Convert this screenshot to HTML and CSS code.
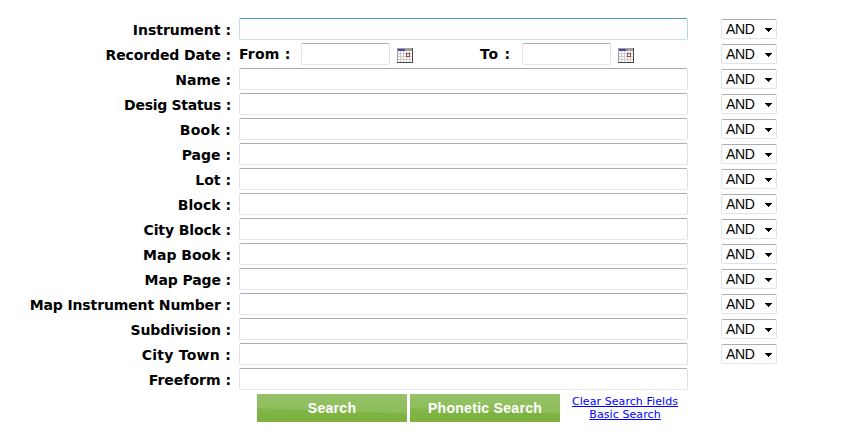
FILE: index.html
```
<!DOCTYPE html>
<html lang="en">
<head>
<meta charset="utf-8">
<title>Advanced Search</title>
<link rel="stylesheet" href="styles.css">
</head>
<body>
<svg width="0" height="0" class="defs" aria-hidden="true">
<symbol id="calendar" viewBox="0 0 16 15" shape-rendering="crispEdges">
<path fill="#fff" d="M0 0h16v15H0z"/>
<path fill="#ccc" d="M3 3h1v11H3zM6 3h1v11H6zM9 3h1v11H9zM12 3h1v11h-1zM1 5h14v1H1zM1 8h14v1H1zM1 11h14v1H1z"/>
<path fill="#a0a0a0" d="M0 0h16v3H0zM0 3h1v12H0z"/>
<path fill="#4848a8" d="M1 1h7v2H1z"/>
<path fill="#484848" d="M15 0h1v15h-1zM0 14h16v1H0z"/>
<path fill="#a84040" d="M9 5h4v4H9z"/>
<path fill="#fff" d="M10 6h2v2h-2z"/>
</symbol>
<symbol id="arrow" viewBox="0 0 7 4" shape-rendering="crispEdges">
<path d="M0 0h7v1H0zM1 1h5v1H1zM2 2h3v1H2zM3 3h1v1H3z"/>
</symbol>
</svg>
<main class="form">
<div class="row"><label class="label">Instrument :</label><div class="field active"></div><div class="select">AND<svg class="arrow"><use href="#arrow"/></svg></div></div>
<div class="row"><label class="label snug">Recorded Date :</label><div class="dates"><span class="from">From :</span><div class="field"></div><svg class="cal"><use href="#calendar"/></svg><span class="to">To :</span><div class="field"></div><svg class="cal"><use href="#calendar"/></svg></div><div class="select">AND<svg class="arrow"><use href="#arrow"/></svg></div></div>
<div class="row"><label class="label">Name :</label><div class="field"></div><div class="select">AND<svg class="arrow"><use href="#arrow"/></svg></div></div>
<div class="row"><label class="label tight">Desig Status :</label><div class="field"></div><div class="select">AND<svg class="arrow"><use href="#arrow"/></svg></div></div>
<div class="row"><label class="label loose">Book :</label><div class="field"></div><div class="select">AND<svg class="arrow"><use href="#arrow"/></svg></div></div>
<div class="row"><label class="label">Page :</label><div class="field"></div><div class="select">AND<svg class="arrow"><use href="#arrow"/></svg></div></div>
<div class="row"><label class="label">Lot :</label><div class="field"></div><div class="select">AND<svg class="arrow"><use href="#arrow"/></svg></div></div>
<div class="row"><label class="label">Block :</label><div class="field"></div><div class="select">AND<svg class="arrow"><use href="#arrow"/></svg></div></div>
<div class="row"><label class="label snug">City Block :</label><div class="field"></div><div class="select">AND<svg class="arrow"><use href="#arrow"/></svg></div></div>
<div class="row"><label class="label">Map Book :</label><div class="field"></div><div class="select">AND<svg class="arrow"><use href="#arrow"/></svg></div></div>
<div class="row"><label class="label snug">Map Page :</label><div class="field"></div><div class="select">AND<svg class="arrow"><use href="#arrow"/></svg></div></div>
<div class="row"><label class="label snug">Map Instrument Number :</label><div class="field"></div><div class="select">AND<svg class="arrow"><use href="#arrow"/></svg></div></div>
<div class="row"><label class="label snug">Subdivision :</label><div class="field"></div><div class="select">AND<svg class="arrow"><use href="#arrow"/></svg></div></div>
<div class="row"><label class="label loose">City Town :</label><div class="field"></div><div class="select">AND<svg class="arrow"><use href="#arrow"/></svg></div></div>
<div class="row"><label class="label">Freeform :</label><div class="field"></div></div>
<div class="actions">
<button class="button">Search</button>
<button class="button">Phonetic Search</button>
<div class="links"><a href="#">Clear Search Fields</a><a href="#">Basic Search</a></div>
</div>
</main>
</body>
</html>
```
FILE: styles.css
```
* { box-sizing: border-box; }
body { margin: 0; background: #fff; color: #000; font-family: "DejaVu Sans", sans-serif; }
.defs { position: absolute; }
.form { padding-top: 18px; }
.row { display: grid; grid-template-columns: 231px 449px 56px; column-gap: 8px; height: 25px; align-items: start; }
.row .select { margin-left: 25px; }
.label, .from, .to { font-size: 14px; font-weight: bold; line-height: 22px; white-space: nowrap; }
.label { text-align: right; padding-top: 1px; }
.snug { letter-spacing: -0.12px; }
.tight { letter-spacing: -0.28px; }
.loose { letter-spacing: 0.25px; }
.from { letter-spacing: 0.2px; }
.to { letter-spacing: 0.8px; }
.field { height: 22px; border: 1px solid #e2e3ea; border-top-color: #abadb3; border-right-color: #dbdfe6; border-bottom-color: #e3e9ef; border-radius: 2px; background: #fff; }
.field.active { border-color: #5794bf #b7d5ea #c7e2f1 #c5daed; }
.dates { display: grid; grid-template-columns: 62px 89px 7px 16px 67px 42px 89px 7px 16px; }
.dates .cal { width: 16px; height: 15px; margin-top: 5px; }
.dates .from { grid-column: 1; }
.dates .cal:nth-of-type(1) { grid-column: 4; }
.dates .to { grid-column: 6; }
.dates .cal:nth-of-type(2) { grid-column: 9; }
.select { display: flex; align-items: center; justify-content: space-between; width: 56px; height: 20px; margin-top: 1px; padding: 0 4px; border: 1px solid #e2e3ea; border-top-color: #abadb3; border-radius: 2px; font: 14px/18px "Liberation Sans", sans-serif; letter-spacing: -0.3px; }
.arrow { width: 7px; height: 4px; margin-top: 2px; }
.actions { display: flex; gap: 3px; padding: 1px 0 0 257px; }
.button { width: 150px; height: 28px; padding: 0; border: 0; background: linear-gradient(182deg, rgba(255,255,255,.11) 57%, transparent 60%), linear-gradient(#89bb56, #7bb13d); color: #fff; font: bold 14px/28px "Liberation Sans", sans-serif; letter-spacing: 0.3px; }
.links { display: flex; flex-direction: column; align-items: center; width: 106px; margin-left: 9px; padding-top: 1px; font-size: 11px; line-height: 13px; letter-spacing: 0.08px; white-space: nowrap; }
.links a { color: #00f; }
```
